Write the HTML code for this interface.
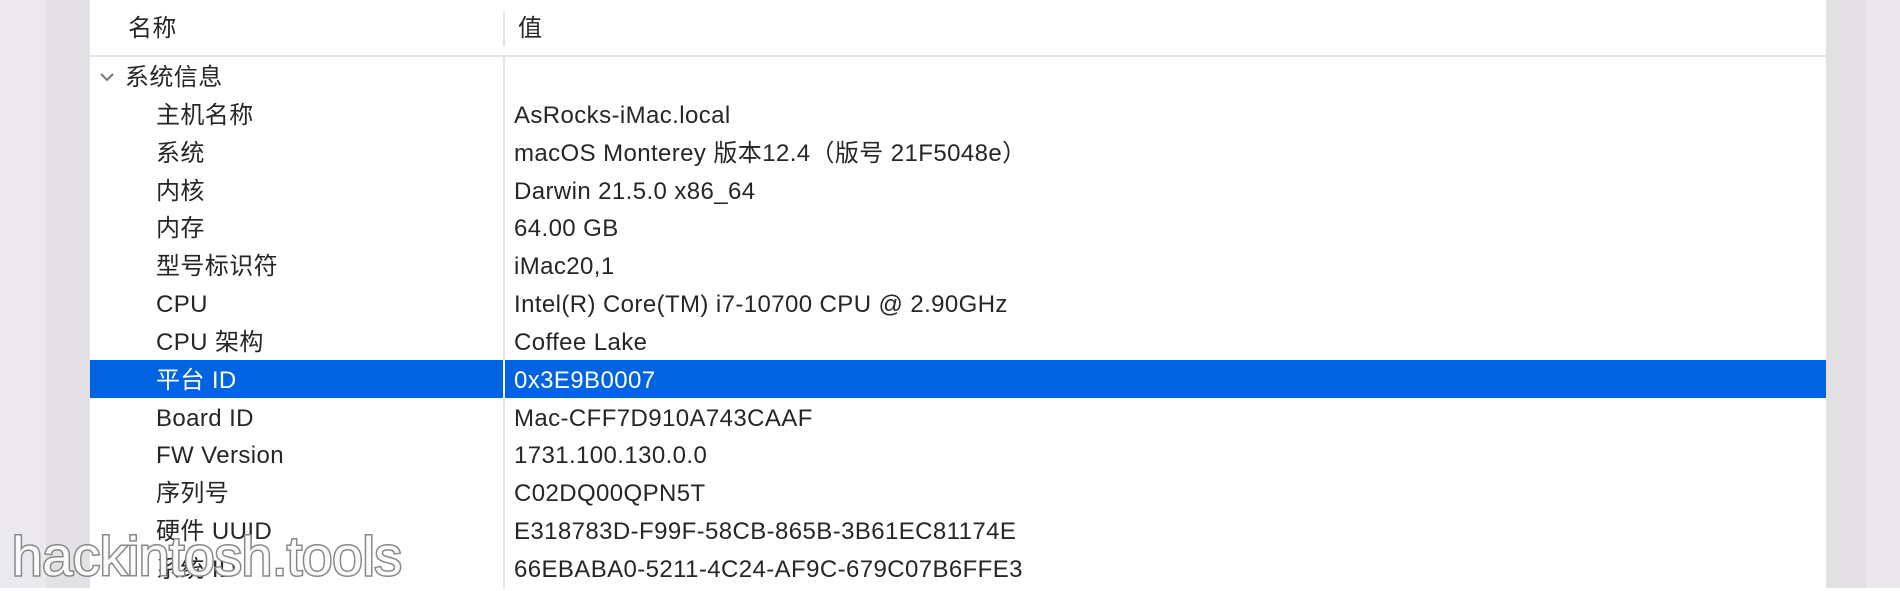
<!DOCTYPE html>
<html><head><meta charset="utf-8"><style>
html,body{margin:0;padding:0;width:1900px;height:588px;overflow:hidden;background:#fff;font-family:"Liberation Sans","Noto Sans CJK SC",sans-serif;}
.g1{position:absolute;left:0;top:0;width:46px;height:588px;background:#ebe9ed}
.g2{position:absolute;left:46px;top:0;width:44px;height:588px;background:#e3e1e5}
.g3{position:absolute;left:1826px;top:0;width:40px;height:588px;background:#e2e0e3}
.g4{position:absolute;left:1866px;top:0;width:34px;height:588px;background:#ebe8ec}
.hdr{position:absolute;top:0;left:90px;width:1736px;height:55px;border-bottom:2px solid #e4e4e4}
.t{position:absolute;font-size:24px;letter-spacing:0.4px;color:#262626;white-space:nowrap;line-height:38px;margin-top:2px}
.div{position:absolute;left:503px;width:2px;background:#e4e4e4}
.sel{position:absolute;left:90px;top:360px;width:1736px;height:38px;background:#0064e1}
.wm{position:absolute;left:12px;top:521px;font-size:55px;line-height:70px;color:#fafafa;-webkit-text-stroke:3px #888;paint-order:stroke fill;white-space:nowrap;letter-spacing:-0.3px}
</style></head><body>
<div class="g1"></div><div class="g2"></div><div class="g3"></div><div class="g4"></div>
<div class="hdr"></div>
<div class="div" style="top:12px;height:34px"></div>
<div class="div" style="top:57px;height:531px"></div>
<div class="t" style="left:128px;top:8px">名称</div>
<div class="t" style="left:518px;top:8px">值</div>
<div class="sel"></div>
<div class="div" style="top:360px;height:38px;background:#fff;width:2px"></div>
<svg style="position:absolute;left:99px;top:71px" width="16" height="12"><path d="M2 3 L8 9 L14 3" stroke="#777" stroke-width="2" fill="none"/></svg>
<div class="t" style="left:125px;top:57px">系统信息</div>
<div class="t" style="left:156px;top:95px">主机名称</div><div class="t" style="left:514px;top:95px">AsRocks-iMac.local</div>
<div class="t" style="left:156px;top:133px">系统</div><div class="t" style="left:514px;top:133px">macOS Monterey 版本12.4（版号 21F5048e）</div>
<div class="t" style="left:156px;top:171px">内核</div><div class="t" style="left:514px;top:171px">Darwin 21.5.0 x86_64</div>
<div class="t" style="left:156px;top:208px">内存</div><div class="t" style="left:514px;top:208px">64.00 GB</div>
<div class="t" style="left:156px;top:246px">型号标识符</div><div class="t" style="left:514px;top:246px">iMac20,1</div>
<div class="t" style="left:156px;top:284px">CPU</div><div class="t" style="left:514px;top:284px">Intel(R) Core(TM) i7-10700 CPU @ 2.90GHz</div>
<div class="t" style="left:156px;top:322px">CPU 架构</div><div class="t" style="left:514px;top:322px">Coffee Lake</div>
<div class="t" style="left:156px;top:360px;color:#fff">平台 ID</div><div class="t" style="left:514px;top:360px;color:#fff">0x3E9B0007</div>
<div class="t" style="left:156px;top:398px">Board ID</div><div class="t" style="left:514px;top:398px">Mac-CFF7D910A743CAAF</div>
<div class="t" style="left:156px;top:435px">FW Version</div><div class="t" style="left:514px;top:435px">1731.100.130.0.0</div>
<div class="t" style="left:156px;top:473px">序列号</div><div class="t" style="left:514px;top:473px">C02DQ00QPN5T</div>
<div class="t" style="left:156px;top:511px">硬件 UUID</div><div class="t" style="left:514px;top:511px">E318783D-F99F-58CB-865B-3B61EC81174E</div>
<div class="t" style="left:156px;top:549px">系统 ID</div><div class="t" style="left:514px;top:549px">66EBABA0-5211-4C24-AF9C-679C07B6FFE3</div>
<div class="wm">hackintosh.tools</div>
</body></html>
